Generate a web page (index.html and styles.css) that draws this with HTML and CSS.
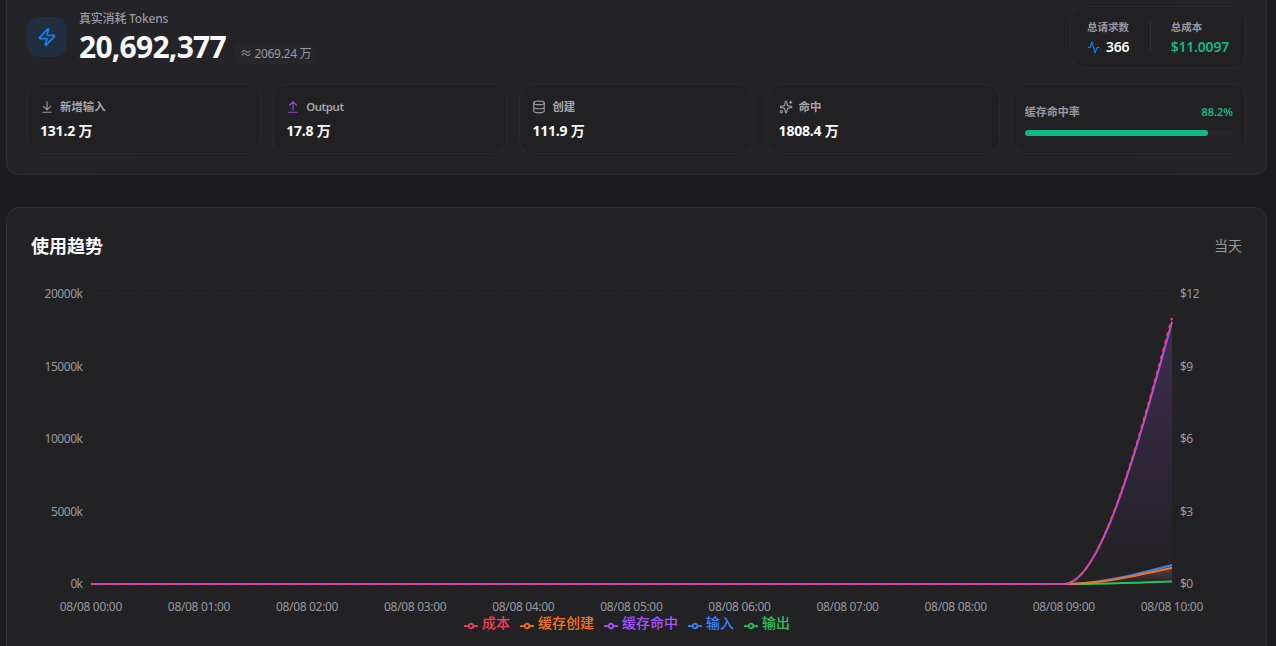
FILE: index.html
```html
<!DOCTYPE html>
<html lang="zh-CN">

<head>
    <meta charset="UTF-8">
    <meta name="viewport" content="width=device-width, initial-scale=1.0">
    <title>使用趋势</title>
    <link rel="stylesheet" href="styles.css">
</head>

<body>
    <div class="card summary">
        <div class="summary-top">
            <div class="hero">
                <div class="hero-icon">
                    <svg width="20" height="20" viewBox="0 0 24 24" class="icon"><path d="M4 14a1 1 0 0 1-.78-1.63l9.9-10.2a.5.5 0 0 1 .86.46l-1.92 6.02A1 1 0 0 0 13 10h7a1 1 0 0 1 .78 1.63l-9.9 10.2a.5.5 0 0 1-.86-.46l1.92-6.02A1 1 0 0 0 11 14z"/></svg>
                </div>
                <div class="hero-text">
                    <p class="hero-label">真实消耗 Tokens</p>
                    <div class="hero-row">
                        <h1>20,692,377</h1>
                        <span class="approx">≈ 2069.24 万</span>
                    </div>
                </div>
            </div>
            <div class="totals">
                <div class="total requests">
                    <p>总请求数</p>
                    <div class="total-value">
                        <svg width="13" height="13" viewBox="0 0 24 24" class="icon blue"><path d="M22 12h-2.48a2 2 0 0 0-1.93 1.46l-2.35 8.36a.25.25 0 0 1-.48 0L9.24 2.18a.25.25 0 0 0-.48 0l-2.35 8.36A2 2 0 0 1 4.49 12H2"/></svg>
                        <span>366</span>
                    </div>
                </div>
                <div class="divider"></div>
                <div class="total cost">
                    <p>总成本</p>
                    <div class="total-value green">$11.0097</div>
                </div>
            </div>
        </div>

        <div class="stats">
            <div class="stat">
                <div class="stat-label">
                    <svg width="14" height="14" viewBox="0 0 24 24" class="icon"><path d="M12 17V3M6 11l6 6 6-6M19 21H5"/></svg>
                    <span>新增输入</span>
                </div>
                <div class="stat-value">131.2 万</div>
            </div>
            <div class="stat">
                <div class="stat-label">
                    <svg width="14" height="14" viewBox="0 0 24 24" class="icon purple"><path d="M18 9l-6-6-6 6M12 3v14M5 21h14"/></svg>
                    <span class="latin">Output</span>
                </div>
                <div class="stat-value">17.8 万</div>
            </div>
            <div class="stat">
                <div class="stat-label">
                    <svg width="14" height="14" viewBox="0 0 24 24" class="icon"><ellipse cx="12" cy="5" rx="9" ry="3"/><path d="M3 5v14a9 3 0 0 0 18 0V5M3 12a9 3 0 0 0 18 0"/></svg>
                    <span>创建</span>
                </div>
                <div class="stat-value">111.9 万</div>
            </div>
            <div class="stat">
                <div class="stat-label">
                    <svg width="14" height="14" viewBox="0 0 24 24" class="icon"><path d="M11.02 2.81a1 1 0 0 1 1.96 0l1.05 5.56a2 2 0 0 0 1.6 1.6l5.56 1.05a1 1 0 0 1 0 1.96l-5.56 1.05a2 2 0 0 0-1.6 1.6l-1.05 5.56a1 1 0 0 1-1.96 0l-1.05-5.56a2 2 0 0 0-1.6-1.6l-5.56-1.05a1 1 0 0 1 0-1.96l5.56-1.05a2 2 0 0 0 1.6-1.6zM20 2v4M22 4h-4"/><circle cx="4" cy="20" r="2"/></svg>
                    <span>命中</span>
                </div>
                <div class="stat-value">1808.4 万</div>
            </div>
            <div class="stat rate">
                <div class="rate-row">
                    <span>缓存命中率</span>
                    <span class="rate-value">88.2%</span>
                </div>
                <div class="bar"><div class="bar-fill" style="width: 88.2%"></div></div>
            </div>
        </div>
    </div>

    <div class="card trend">
        <div class="trend-head">
            <h2>使用趋势</h2>
            <span>当天</span>
        </div>
        <svg class="chart" width="1211" height="331" viewBox="31 284 1211 331">
            <defs>
                <linearGradient id="fillHit" x1="0" y1="0" x2="0" y2="1">
                    <stop offset="5%" stop-color="#a855f7" stop-opacity="0.2"/>
                    <stop offset="95%" stop-color="#a855f7" stop-opacity="0"/>
                </linearGradient>
                <linearGradient id="fillInput" x1="0" y1="0" x2="0" y2="1">
                    <stop offset="5%" stop-color="#3b82f6" stop-opacity="0.2"/>
                    <stop offset="95%" stop-color="#3b82f6" stop-opacity="0"/>
                </linearGradient>
                <linearGradient id="fillCreate" x1="0" y1="0" x2="0" y2="1">
                    <stop offset="5%" stop-color="#f97316" stop-opacity="0.2"/>
                    <stop offset="95%" stop-color="#f97316" stop-opacity="0"/>
                </linearGradient>
            </defs>

            <path class="grid-line" d="M91 293.5H1172"/>

            <g class="ticks left">
                <text x="83" y="298" textLength="38.5">20000k</text>
                <text x="83" y="371" textLength="38.5">15000k</text>
                <text x="83" y="443" textLength="38.5">10000k</text>
                <text x="83" y="516" textLength="32">5000k</text>
                <text x="83" y="588" textLength="12.5">0k</text>
            </g>
            <g class="ticks">
                <text x="1180" y="298" textLength="19.5">$12</text>
                <text x="1180" y="371" textLength="13">$9</text>
                <text x="1180" y="443" textLength="13">$6</text>
                <text x="1180" y="516" textLength="13">$3</text>
                <text x="1180" y="588" textLength="13">$0</text>
            </g>
            <g class="ticks bottom">
                <text x="91" y="611" textLength="62.5">08/08 00:00</text>
                <text x="199.1" y="611" textLength="62.5">08/08 01:00</text>
                <text x="307.2" y="611" textLength="62.5">08/08 02:00</text>
                <text x="415.3" y="611" textLength="62.5">08/08 03:00</text>
                <text x="523.4" y="611" textLength="62.5">08/08 04:00</text>
                <text x="631.5" y="611" textLength="62.5">08/08 05:00</text>
                <text x="739.6" y="611" textLength="62.5">08/08 06:00</text>
                <text x="847.7" y="611" textLength="62.5">08/08 07:00</text>
                <text x="955.8" y="611" textLength="62.5">08/08 08:00</text>
                <text x="1063.9" y="611" textLength="62.5">08/08 09:00</text>
                <text x="1172" y="611" textLength="62.5">08/08 10:00</text>
            </g>

            <!-- input -->
            <path fill="url(#fillInput)" d="M1064 584C1100 584 1136 574.5 1172 565V584Z"/>
            <path class="line" stroke="#3b82f6" d="M91 584H1064C1100 584 1136 574.5 1172 565"/>
            <!-- output -->
            <path class="line" stroke="#22c55e" d="M91 584H1064C1100 584 1136 582.7 1172 581.4"/>
            <!-- cache create -->
            <path fill="url(#fillCreate)" d="M1064 584C1100 584 1136 575.9 1172 567.8V584Z"/>
            <path class="line" stroke="#f97316" d="M91 584H1064C1100 584 1136 575.9 1172 567.8"/>
            <!-- cache hit -->
            <path fill="url(#fillHit)" d="M1064 584C1100 584 1136 452.9 1172 321.8V584Z"/>
            <path class="line" stroke="#a855f7" d="M91 584H1064C1100 584 1136 452.9 1172 321.8"/>
            <!-- cost -->
            <path class="line dashed" stroke="#f43f5e" d="M91 584H1064C1100 584 1136 451 1172 318"/>
        </svg>
        <div class="legend">
            <span class="legend-item cost-c"><svg width="14" height="14" viewBox="0 0 32 32"><path d="M0 16h10.67A5.33 5.33 0 1 1 21.33 16H32M21.33 16A5.33 5.33 0 1 1 10.67 16"/></svg>成本</span>
            <span class="legend-item create-c"><svg width="14" height="14" viewBox="0 0 32 32"><path d="M0 16h10.67A5.33 5.33 0 1 1 21.33 16H32M21.33 16A5.33 5.33 0 1 1 10.67 16"/></svg>缓存创建</span>
            <span class="legend-item hit-c"><svg width="14" height="14" viewBox="0 0 32 32"><path d="M0 16h10.67A5.33 5.33 0 1 1 21.33 16H32M21.33 16A5.33 5.33 0 1 1 10.67 16"/></svg>缓存命中</span>
            <span class="legend-item input-c"><svg width="14" height="14" viewBox="0 0 32 32"><path d="M0 16h10.67A5.33 5.33 0 1 1 21.33 16H32M21.33 16A5.33 5.33 0 1 1 10.67 16"/></svg>输入</span>
            <span class="legend-item output-c"><svg width="14" height="14" viewBox="0 0 32 32"><path d="M0 16h10.67A5.33 5.33 0 1 1 21.33 16H32M21.33 16A5.33 5.33 0 1 1 10.67 16"/></svg>输出</span>
        </div>
    </div>
</body>

</html>
```

FILE: styles.css
```css
* {
    margin: 0;
    padding: 0;
    box-sizing: border-box;
}

body {
    height: 646px;
    overflow: hidden;
    padding: 0 9px 0 6px;
    background: #1c1c1e;
    color: #fafafa;
    font-family: "Noto Sans", "Noto Sans CJK SC", sans-serif;
}

svg {
    display: block;
    flex-shrink: 0;
}

.icon {
    fill: none;
    stroke: currentColor;
    stroke-width: 2;
    stroke-linecap: round;
    stroke-linejoin: round;
}

.blue {
    color: #0a84ff;
}

.green {
    color: #10b981;
}

.card {
    border: 1px solid #303033;
    border-radius: 14px;
    background: #222224;
}

/* summary */
.summary {
    height: 175px;
    border-top: none;
    border-radius: 0 0 12px 12px;
    padding: 6px 20px 20px;
    background: linear-gradient(90deg, #232328, #242427);
}

.summary-top {
    display: flex;
    justify-content: space-between;
    height: 62px;
}

.hero {
    display: flex;
    align-items: center;
    gap: 12px;
}

.hero-icon {
    display: flex;
    align-items: center;
    justify-content: center;
    width: 40px;
    height: 40px;
    border-radius: 12px;
    background: #212e40;
    color: #0a84ff;
}

.hero-text {
    padding-top: 5px;
}

.hero-label {
    height: 16px;
    margin-top: -1px;
    line-height: 16px;
    font-size: 12px;
    font-weight: 500;
    letter-spacing: -0.2px;
    color: #98989f;
}

.hero-row {
    display: flex;
    align-items: center;
    gap: 8px;
    height: 40px;
}

h1 {
    font-size: 30px;
    line-height: 40px;
    font-weight: 700;
    letter-spacing: -0.75px;
}

.approx {
    height: 20px;
    margin-top: 13px;
    padding: 0 6px;
    border-radius: 6px;
    background: #27272a;
    font-size: 12px;
    line-height: 20px;
    letter-spacing: -0.3px;
    color: #98989f;
}

.totals {
    display: flex;
    width: 176px;
    padding: 14px 16px 0;
    border: 1px solid #2b2b2e;
    border-radius: 14px;
    background: #212123;
}

.total p {
    height: 14px;
    font-size: 10.5px;
    line-height: 13px;
    font-weight: 600;
    color: #98989f;
}

.total-value {
    display: flex;
    align-items: center;
    gap: 6px;
    height: 24px;
    font-size: 14px;
    line-height: 24px;
    font-weight: 600;
    letter-spacing: -0.2px;
}

.requests {
    width: 63px;
}

.divider {
    width: 1px;
    height: 32px;
    margin: -1px 20px 0 0;
    background: #303033;
}

/* stat boxes */
.stats {
    display: grid;
    grid-template-columns: repeat(5, 1fr);
    gap: 12px;
    margin-top: 16px;
}

.stat {
    height: 70px;
    padding: 14px 12px 0;
    border: 1px solid #2b2b2e;
    border-radius: 14px;
    background: #212124;
}

.stat-label {
    display: flex;
    align-items: center;
    gap: 6px;
    height: 16px;
    font-size: 11.4px;
    line-height: 16px;
    font-weight: 700;
    color: #a6a6aa;
}

.stat-label .icon {
    color: #98989f;
}

.stat-label .purple {
    color: #9645dd;
}

.latin {
    font-weight: 600;
    letter-spacing: -0.4px;
}

.stat-value {
    margin-top: 6px;
    font-size: 14px;
    line-height: 20px;
    font-weight: 700;
    letter-spacing: -0.2px;
}

.rate {
    padding-top: 19px;
}

.rate-row {
    display: flex;
    justify-content: space-between;
    height: 16px;
    font-size: 11px;
    line-height: 16px;
    font-weight: 600;
    color: #98989f;
}

.rate-value {
    color: #10b981;
}

.bar {
    height: 6px;
    margin-top: 10px;
    border-radius: 3px;
    background: #27272a;
}

.bar-fill {
    height: 6px;
    border-radius: 3px;
    background: #10b981;
}

/* trend chart */
.trend {
    height: 439px;
    margin-top: 32px;
    padding: 24px 24px 0;
    border-bottom: none;
    border-radius: 14px 14px 0 0;
}

.trend-head {
    display: flex;
    justify-content: space-between;
    align-items: center;
    height: 28px;
    margin-bottom: 24px;
}

h2 {
    font-size: 18px;
    line-height: 28px;
    font-weight: 700;
}

.trend-head span {
    padding-bottom: 2px;
    font-size: 14px;
    color: #98989f;
}

.grid-line {
    stroke: #2b2b2e;
    stroke-dasharray: 3 3;
}

.ticks {
    font-size: 12px;
    fill: #98989f;
}

.left {
    text-anchor: end;
}

.bottom {
    text-anchor: middle;
}

.line {
    fill: none;
    stroke-width: 2;
}

.dashed {
    stroke-dasharray: 4 4;
}

.legend {
    display: flex;
    justify-content: center;
    gap: 10px;
    margin-right: 19px;
    font-size: 14px;
    font-weight: 500;
    line-height: 16px;
}

.legend-item {
    display: flex;
    gap: 4px;
}

.legend-item svg {
    margin-top: 4px;
    fill: none;
    stroke: currentColor;
    stroke-width: 4;
}

.cost-c {
    color: #f43f5e;
}

.create-c {
    color: #f97316;
}

.hit-c {
    color: #a855f7;
}

.input-c {
    color: #3b82f6;
}

.output-c {
    color: #22c55e;
}
```
